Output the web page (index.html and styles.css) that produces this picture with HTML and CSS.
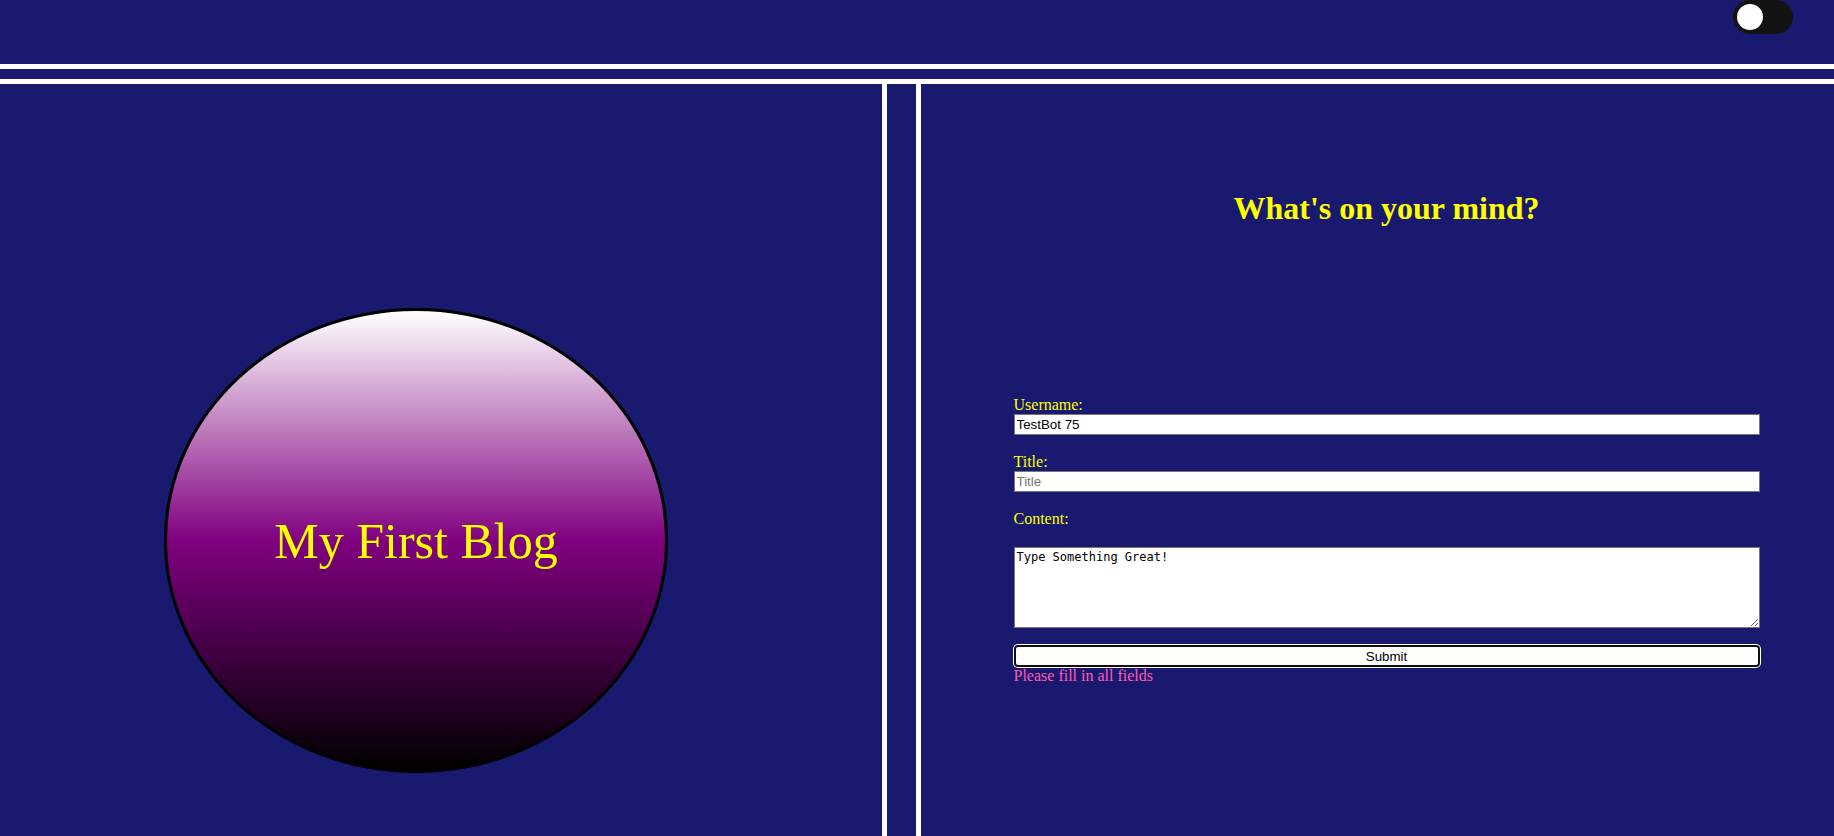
FILE: index.html
```html
<!DOCTYPE html>
<html lang="en">
<head>
<meta charset="utf-8">
<title>My First Blog</title>
<link rel="stylesheet" href="styles.css">
</head>
<body>
<header class="topbar">
  <label class="switch">
    <input type="checkbox" class="switch-input">
    <span class="slider"></span>
  </label>
</header>
<div class="divider"></div>
<main class="main">
  <section class="left-col">
    <div class="blog-circle">
      <span class="blog-title">My First Blog</span>
    </div>
  </section>
  <div class="spacer"></div>
  <section class="right-col">
    <h1 class="prompt">What's on your mind?</h1>
    <form class="post-form">
      <label class="field-label" for="username">Username:</label>
      <input class="text-input" id="username" type="text" value="TestBot 75">
      <label class="field-label gap" for="title">Title:</label>
      <input class="text-input" id="title" type="text" placeholder="Title">
      <label class="field-label gap" for="content">Content:</label>
      <textarea class="content-area" id="content">Type Something Great!</textarea>
      <button class="submit-btn" type="button">Submit</button>
      <p class="error-msg">Please fill in all fields</p>
    </form>
  </section>
</main>
</body>
</html>
```
FILE: styles.css
```css
html, body {
  margin: 0;
  padding: 0;
}
body {
  background: #191970;
  font-family: "Liberation Serif", "Times New Roman", serif;
  width: 1834px;
  height: 836px;
  overflow: hidden;
}
.topbar {
  height: 64px;
  border-bottom: 5px solid #ffffff;
  display: flex;
  justify-content: flex-end;
  align-items: flex-start;
  padding-right: 41px;
}
.switch {
  position: relative;
  display: inline-block;
  width: 60px;
  height: 34px;
}
.switch-input {
  opacity: 0;
  width: 0;
  height: 0;
  margin: 0;
}
.slider {
  position: absolute;
  inset: 0;
  background: #131313;
  border-radius: 34px;
}
.slider::before {
  content: "";
  position: absolute;
  left: 4px;
  top: 4px;
  width: 26px;
  height: 26px;
  border-radius: 50%;
  background: #ffffff;
}
.divider {
  height: 10px;
  border-bottom: 5px solid #ffffff;
}
.main {
  display: flex;
  height: 752px;
}
.left-col {
  width: 887px;
  box-sizing: border-box;
  border-right: 5px solid #ffffff;
  padding-top: 224px;
  padding-left: 164px;
}
.blog-circle {
  width: 498px;
  height: 459px;
  border: 3px solid #000000;
  border-radius: 50%;
  background: linear-gradient(#ffffff, #800080, #000000);
  display: flex;
  align-items: center;
  justify-content: center;
}
.blog-title {
  color: #ffff00;
  font-size: 50px;
}
.spacer {
  width: 29px;
  border-right: 5px solid #ffffff;
}
.right-col {
  flex: 1;
  padding: 106px 0 0 18px;
}
.prompt {
  margin: 0;
  text-align: center;
  color: #ffff00;
  font-size: 32px;
  font-weight: bold;
  line-height: 37px;
}
.post-form {
  width: 746px;
  margin: 169px auto 0;
  display: flex;
  flex-direction: column;
}
.field-label {
  color: #ffff00;
  font-size: 16px;
  line-height: 18px;
}
.field-label.gap {
  margin-top: 18px;
}
.text-input {
  height: 21px;
  box-sizing: border-box;
  border: 1px solid #767676;
  padding: 1px 2px;
  font-family: "Liberation Sans", Arial, sans-serif;
  font-size: 13.33px;
  color: #000000;
  background: #ffffff;
  margin: 0;
}
.text-input::placeholder {
  color: #757575;
}
.content-area {
  margin: 19px 0 0;
  height: 81px;
  box-sizing: border-box;
  border: 1px solid #767676;
  padding: 2px;
  font-family: "DejaVu Sans Mono", monospace;
  font-size: 12px;
  color: #000000;
  background: #ffffff;
}
.submit-btn {
  margin-top: 17px;
  height: 22px;
  box-sizing: border-box;
  border: 2px solid #111111;
  border-radius: 4px;
  box-shadow: 0 0 0 1px #ffffff;
  background: #ffffff;
  color: #000000;
  font-family: "Liberation Sans", Arial, sans-serif;
  font-size: 13.33px;
  padding: 0;
}
.error-msg {
  margin: 0;
  color: #ff5cb0;
  font-size: 16px;
  line-height: 18px;
}
```
